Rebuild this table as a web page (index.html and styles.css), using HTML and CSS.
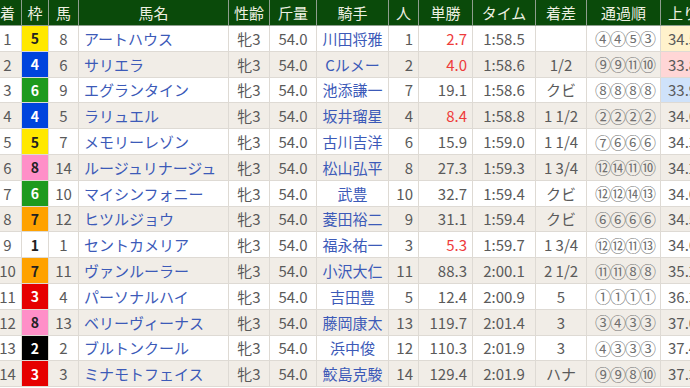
FILE: index.html
```html
<!DOCTYPE html>
<html lang="ja">
<head>
    <meta charset="UTF-8">
    <title>レース結果</title>
    <link rel="stylesheet" href="styles.css">
</head>
<body>
    <table class="result">
        <colgroup>
            <col class="c-rank"><col class="c-waku"><col class="c-num"><col class="c-name">
            <col class="c-sex"><col class="c-wt"><col class="c-jockey"><col class="c-pop">
            <col class="c-odds"><col class="c-time"><col class="c-diff"><col class="c-pass"><col class="c-last">
        </colgroup>
        <thead>
            <tr>
                <th>着</th><th>枠</th><th>馬</th><th>馬名</th><th>性齢</th><th>斤量</th><th>騎手</th>
                <th>人</th><th>単勝</th><th>タイム</th><th>着差</th><th>通過順</th><th class="left">上り</th>
            </tr>
        </thead>
        <tbody>
            <tr>
                <td>1</td><td class="waku w5">5</td><td>8</td><td class="name">アートハウス</td><td>牝3</td><td>54.0</td>
                <td class="jockey">川田将雅</td><td class="right">1</td><td class="right red">2.7</td><td>1:58.5</td><td></td>
                <td class="pass">④④⑤③</td><td class="last l1">34.5</td>
            </tr>
            <tr>
                <td>2</td><td class="waku w4">4</td><td>6</td><td class="name">サリエラ</td><td>牝3</td><td>54.0</td>
                <td class="jockey">Cルメー</td><td class="right">2</td><td class="right red">4.0</td><td>1:58.6</td><td>1/2</td>
                <td class="pass">⑨⑨⑪⑩</td><td class="last l2">33.8</td>
            </tr>
            <tr>
                <td>3</td><td class="waku w6">6</td><td>9</td><td class="name">エグランタイン</td><td>牝3</td><td>54.0</td>
                <td class="jockey">池添謙一</td><td class="right">7</td><td class="right">19.1</td><td>1:58.6</td><td>クビ</td>
                <td class="pass">⑧⑧⑧⑧</td><td class="last l3">33.9</td>
            </tr>
            <tr>
                <td>4</td><td class="waku w4">4</td><td>5</td><td class="name">ラリュエル</td><td>牝3</td><td>54.0</td>
                <td class="jockey">坂井瑠星</td><td class="right">4</td><td class="right red">8.4</td><td>1:58.8</td><td>1 1/2</td>
                <td class="pass">②②②②</td><td class="last">34.6</td>
            </tr>
            <tr>
                <td>5</td><td class="waku w5">5</td><td>7</td><td class="name">メモリーレゾン</td><td>牝3</td><td>54.0</td>
                <td class="jockey">古川吉洋</td><td class="right">6</td><td class="right">15.9</td><td>1:59.0</td><td>1 1/4</td>
                <td class="pass">⑦⑥⑥⑥</td><td class="last">34.3</td>
            </tr>
            <tr>
                <td>6</td><td class="waku w8">8</td><td>14</td><td class="name">ルージュリナージュ</td><td>牝3</td><td>54.0</td>
                <td class="jockey">松山弘平</td><td class="right">8</td><td class="right">27.3</td><td>1:59.3</td><td>1 3/4</td>
                <td class="pass">⑫⑭⑪⑩</td><td class="last">34.2</td>
            </tr>
            <tr>
                <td>7</td><td class="waku w6">6</td><td>10</td><td class="name">マイシンフォニー</td><td>牝3</td><td>54.0</td>
                <td class="jockey">武豊</td><td class="right">10</td><td class="right">32.7</td><td>1:59.4</td><td>クビ</td>
                <td class="pass">⑫⑫⑭⑬</td><td class="last">34.0</td>
            </tr>
            <tr>
                <td>8</td><td class="waku w7">7</td><td>12</td><td class="name">ヒツルジョウ</td><td>牝3</td><td>54.0</td>
                <td class="jockey">菱田裕二</td><td class="right">9</td><td class="right">31.1</td><td>1:59.4</td><td>クビ</td>
                <td class="pass">⑥⑥⑥⑥</td><td class="last">34.5</td>
            </tr>
            <tr>
                <td>9</td><td class="waku w1">1</td><td>1</td><td class="name">セントカメリア</td><td>牝3</td><td>54.0</td>
                <td class="jockey">福永祐一</td><td class="right">3</td><td class="right red">5.3</td><td>1:59.7</td><td>1 3/4</td>
                <td class="pass">⑫⑫⑪⑬</td><td class="last">34.6</td>
            </tr>
            <tr>
                <td>10</td><td class="waku w7">7</td><td>11</td><td class="name">ヴァンルーラー</td><td>牝3</td><td>54.0</td>
                <td class="jockey">小沢大仁</td><td class="right">11</td><td class="right">88.3</td><td>2:00.1</td><td>2 1/2</td>
                <td class="pass">⑪⑪⑧⑧</td><td class="last">35.2</td>
            </tr>
            <tr>
                <td>11</td><td class="waku w3">3</td><td>4</td><td class="name">パーソナルハイ</td><td>牝3</td><td>54.0</td>
                <td class="jockey">吉田豊</td><td class="right">5</td><td class="right">12.4</td><td>2:00.9</td><td>5</td>
                <td class="pass">①①①①</td><td class="last">36.3</td>
            </tr>
            <tr>
                <td>12</td><td class="waku w8">8</td><td>13</td><td class="name">ベリーヴィーナス</td><td>牝3</td><td>54.0</td>
                <td class="jockey">藤岡康太</td><td class="right">13</td><td class="right">119.7</td><td>2:01.4</td><td>3</td>
                <td class="pass">③④③③</td><td class="last">37.0</td>
            </tr>
            <tr>
                <td>13</td><td class="waku w2">2</td><td>2</td><td class="name">ブルトンクール</td><td>牝3</td><td>54.0</td>
                <td class="jockey">浜中俊</td><td class="right">12</td><td class="right">110.3</td><td>2:01.9</td><td>3</td>
                <td class="pass">④③③③</td><td class="last">37.4</td>
            </tr>
            <tr>
                <td>14</td><td class="waku w3">3</td><td>3</td><td class="name">ミナモトフェイス</td><td>牝3</td><td>54.0</td>
                <td class="jockey">鮫島克駿</td><td class="right">14</td><td class="right">129.4</td><td>2:01.9</td><td>ハナ</td>
                <td class="pass">⑨⑨⑧⑩</td><td class="last">37.3</td>
            </tr>
        </tbody>
    </table>
</body>
</html>
```

FILE: styles.css
```css
body {
    margin: 0;
    background-color: #ffffff;
    font-family: "Noto Sans CJK JP", "DejaVu Sans", sans-serif;
    overflow: hidden;
}

/* Result table */
.result {
    width: 727px;
    margin-left: -7px;
    border-collapse: collapse;
    table-layout: fixed;
    font-size: 15px;
    color: #5a5a5a;
}

.c-rank { width: 28px; }
.c-waku { width: 27px; }
.c-num { width: 30px; }
.c-name { width: 150px; }
.c-sex { width: 41px; }
.c-wt { width: 47px; }
.c-jockey { width: 72px; }
.c-pop { width: 30px; }
.c-odds { width: 54px; }
.c-time { width: 63px; }
.c-diff { width: 51px; }
.c-pass { width: 74px; }
.c-last { width: 60px; }

.result th {
    height: 25px;
    padding: 0;
    background-color: #0a4a0a;
    color: #eef0e2;
    font-weight: normal;
    border: 1px solid #8e9e8e;
    border-top: none;
    line-height: 1;
}

.result th.left {
    text-align: left;
    padding-left: 7px;
}

.result td {
    height: 24.8px;
    padding: 0;
    text-align: center;
    white-space: nowrap;
    border: 1px solid #dedad4;
    line-height: 1;
}

.result tbody tr:nth-child(even) td {
    background-color: #f1ede7;
}

.result td.name {
    text-align: left;
    padding-left: 5px;
    color: #3c5ab8;
}

.result td.jockey {
    color: #3c5ab8;
}

.result td.right {
    text-align: right;
    padding-right: 5px;
}

.result td.red {
    color: #ee3b3b;
}

.result td.pass {
    font-size: 16px;
    color: #707070;
    letter-spacing: -1px;
    padding-left: 3px;
}

.result td.last {
    text-align: left;
    padding-left: 7px;
}

/* Frame (waku) colours */
.result td.waku {
    font-weight: bold;
    font-size: 14px;
}

.result tbody tr td.w1 { background-color: #ffffff; color: #222; }
.result tbody tr td.w2 { background-color: #000000; color: #fff; }
.result tbody tr td.w3 { background-color: #e60000; color: #fff; }
.result tbody tr td.w4 { background-color: #0044dd; color: #fff; }
.result tbody tr td.w5 { background-color: #ffe800; color: #222; }
.result tbody tr td.w6 { background-color: #1e9a1e; color: #fff; }
.result tbody tr td.w7 { background-color: #ffa200; color: #222; }
.result tbody tr td.w8 { background-color: #ff8fc8; color: #222; }

/* Last 3F highlights */
.result tbody tr td.l1 { background-color: #fff2cc; }
.result tbody tr td.l2 { background-color: #ffd6d6; }
.result tbody tr td.l3 { background-color: #cfe2fa; }
```
